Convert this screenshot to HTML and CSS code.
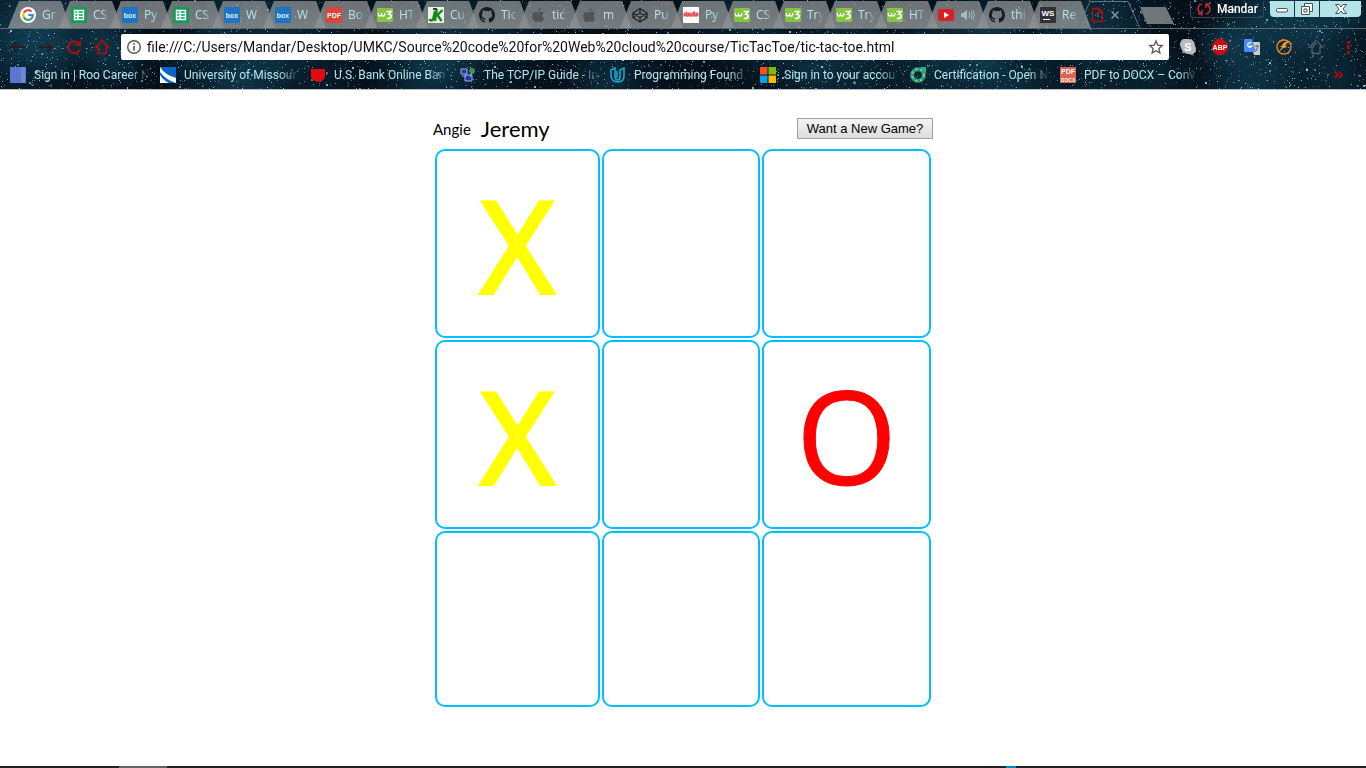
FILE: index.html
```html
<!DOCTYPE html>
<html lang="en">
<head>
<meta charset="utf-8">
<title>Tic Tac Toe</title>
<link rel="stylesheet" href="styles.css">
</head>
<body>
<svg class="defs" aria-hidden="true">
  <symbol id="google" viewBox="0 0 16 16"><circle cx="8" cy="8" r="8" fill="#fff"/><g fill="none" stroke-width="2.2"><path d="M11.5 4.6A4.8 4.8 0 0 0 3.8 5.8" stroke="#ea4335"/><path d="M3.8 5.8a4.8 4.8 0 0 0 0 4.6" stroke="#fbbc05"/><path d="M3.8 10.3a4.8 4.8 0 0 0 7.3 1.5" stroke="#34a853"/><path d="M11.1 11.8A4.8 4.8 0 0 0 12.8 8H8.2" stroke="#4285f4"/></g></symbol>
  <symbol id="sheets" viewBox="0 0 16 16"><rect width="16" height="16" rx="1" fill="#109d58"/><path d="M3.5 3.5h9v9h-9zM3.5 6.5h9M3.5 9.5h9M7 3.5v9" fill="none" stroke="#fff" stroke-width="1.4"/></symbol>
  <symbol id="box" viewBox="0 0 16 16"><rect width="16" height="16" rx="1" fill="#1b75c4"/><text x="8" y="10.6" text-anchor="middle" font-size="7" font-weight="700" fill="#e9f5ff">box</text></symbol>
  <symbol id="pdf" viewBox="0 0 16 16"><rect width="16" height="16" rx="1.5" fill="#dc4437"/><text x="8" y="10.6" text-anchor="middle" font-size="7" font-weight="700" fill="#fff">PDF</text></symbol>
  <symbol id="w3" viewBox="0 0 16 16"><rect y="1" width="16" height="14" rx="1" fill="#83c440"/><path d="M1.300 6v1.400q0 1.600 1.600 1.600t1.700-1.600V6v1.400Q4.600 9 6.200 9T7.800 7.400V6" fill="none" stroke="#fff" stroke-width="1.300"/><path d="M9.500 4.500H14L11.700 7.200q2.600.2 2.400 2.300-.4 2.300-4.300 2" fill="none" stroke="#fff" stroke-width="1.600"/></symbol>
  <symbol id="jk" viewBox="0 0 16 16"><rect width="16" height="16" fill="#e9f0e4"/><path d="M1 12.500q4 2.500 4.500-1.500L7 4M7 14 8.800 2M14.500 3 9.500 8l4 6" fill="none" stroke="#168719" stroke-width="2.400"/><path d="M5 1h4v2H5z" fill="#244b20"/></symbol>
  <symbol id="github" viewBox="0 0 16 16"><path fill="#191c20" d="M8 0C3.580 0 0 3.580 0 8c0 3.540 2.290 6.530 5.470 7.590.4.070.55-.17.55-.38v-1.490c-2.010.37-2.530-.49-2.690-.94-.09-.23-.48-.94-.82-1.130-.28-.15-.68-.52-.01-.53.63-.01 1.080.58 1.230.82.72 1.210 1.870.87 2.330.66.07-.52.28-.87.51-1.070-1.780-.2-3.640-.89-3.640-3.950 0-.87.31-1.590.82-2.150-.08-.2-.36-1.020.08-2.120 0 0 .67-.21 2.200.82a7.500 7.500 0 0 1 4 0c1.530-1.040 2.200-.82 2.200-.82.44 1.100.16 1.920.08 2.120.51.56.82 1.270.82 2.150 0 3.070-1.870 3.750-3.650 3.950.29.25.54.73.54 1.480v2.200c0 .21.15.46.55.38A8 8 0 0 0 16 8c0-4.420-3.580-8-8-8z"/></symbol>
  <symbol id="apple" viewBox="0 0 16 16"><path fill="#505458" d="M10.800 1Q11 3.400 8 4.500 7.700 2 10.800 1zM12.500 9q0-2 1.500-3-2-2.400-5.300-.7-1 .4-2-.1Q4.500 4.400 3.200 6C1 9 3 14 5 15c1.300.4 2-.4 3.300-.4s2 .8 3.200.3c1.300-.7 2-2 2.500-3.200Q12.500 11 12.500 9z"/></symbol>
  <symbol id="codepen" viewBox="0 0 16 16"><path d="M8 1.500 15 6v4.500L8 15 1 10.500V6zM8 1.500V6m0 9v-4.500M1 6l7 4.500L15 6M1 10.500 8 6l7 4.500" fill="none" stroke="#25292c" stroke-width="1.400"/></symbol>
  <symbol id="chart" viewBox="0 0 16 16"><rect width="16" height="16" fill="#fff"/><path d="M1 9V6h1v2h1V5h1v4h1V6h2v3h1V6h1v3h1V5h2v4h1V6h2v3z" fill="#ed5055" stroke="#ed5055"/></symbol>
  <symbol id="youtube" viewBox="0 0 16 16"><rect y="2" width="16" height="12" rx="2" fill="#d92027"/><path d="m6 5 5 3-5 3z" fill="#fff"/></symbol>
  <symbol id="ws" viewBox="0 0 16 16"><rect width="16" height="16" fill="#303236"/><text x="8" y="9" text-anchor="middle" font-size="8" font-weight="700" fill="#fff">WS</text><path d="M3 12.500h7" stroke="#fff" stroke-width="1.200"/></symbol>
  <symbol id="sound" viewBox="0 0 16 16"><path d="M1 6h2l4-3v10L3 10H1z" fill="#a5bdc2"/><path d="M9 5q1.500 3 0 6m2-7q2 4 0 8m2-9q3 5 0 10" fill="none" stroke="#a5bdc2"/></symbol>
</svg>

<header class="browser">
  <canvas class="stars" aria-hidden="true"></canvas>
  <div class="strip">
    <nav class="tabs" aria-label="Open tabs">
      <button class="tab"><svg><use href="#google"/></svg><span>Gr</span></button>
      <button class="tab"><svg><use href="#sheets"/></svg><span>CS</span></button>
      <button class="tab"><svg><use href="#box"/></svg><span>Py</span></button>
      <button class="tab"><svg><use href="#sheets"/></svg><span>CS</span></button>
      <button class="tab"><svg><use href="#box"/></svg><span>W</span></button>
      <button class="tab"><svg><use href="#box"/></svg><span>W</span></button>
      <button class="tab"><svg><use href="#pdf"/></svg><span>Bo</span></button>
      <button class="tab"><svg><use href="#w3"/></svg><span>HT</span></button>
      <button class="tab"><svg><use href="#jk"/></svg><span>Cu</span></button>
      <button class="tab"><svg><use href="#github"/></svg><span>Tic</span></button>
      <button class="tab"><svg><use href="#apple"/></svg><span>tic</span></button>
      <button class="tab"><svg><use href="#apple"/></svg><span>m</span></button>
      <button class="tab"><svg><use href="#codepen"/></svg><span>Pu</span></button>
      <button class="tab"><svg><use href="#chart"/></svg><span>Py</span></button>
      <button class="tab"><svg><use href="#w3"/></svg><span>CS</span></button>
      <button class="tab"><svg><use href="#w3"/></svg><span>Try</span></button>
      <button class="tab"><svg><use href="#w3"/></svg><span>Try</span></button>
      <button class="tab"><svg><use href="#w3"/></svg><span>HT</span></button>
      <button class="tab" aria-label="Video"><svg><use href="#youtube"/></svg><svg><use href="#sound"/></svg></button>
      <button class="tab"><svg><use href="#github"/></svg><span>thi</span></button>
      <button class="tab"><svg><use href="#ws"/></svg><span>Re</span></button>
    </nav>
    <button class="current" aria-label="Current tab">
      <svg class="edge" viewBox="0 0 62 28"><path d="M0 27.500 12 .5h38l12 27" fill="none" stroke="#66757b"/></svg>
      <svg viewBox="0 0 16 16"><path d="M3.500 1.500h6l4 4v9h-10zM9.500 1.500v4h4" fill="none" stroke="#b60b0b" stroke-width="1.300"/></svg>
      <svg viewBox="0 0 16 16"><path d="m4.500 4.500 7 7m0-7-7 7" stroke="#8296a0" stroke-width="1.500"/></svg>
    </button>
    <button class="newtab" aria-label="New tab"></button>
    <button class="profile"><svg viewBox="0 0 16 16"><path d="M6 3Q2 4 2 8q0 3 3 4M6 9v4H2M10 13q4-1 4-5 0-3-3-4M10 7V3h4" fill="none" stroke="#c02a2a" stroke-width="1.600"/></svg>Mandar</button>
    <div class="window">
      <button aria-label="Minimize"><svg viewBox="0 0 16 16"><rect x="2.500" y="7.500" width="11" height="3.500" rx="1" fill="#fff" stroke="#4a555b"/></svg></button>
      <button aria-label="Restore"><svg viewBox="0 0 16 16"><path d="M5.500 2.500h8v8h-3v3h-8v-8h3zM5.500 5.500h5v5M5 8h3v3H5z" fill="#fff" stroke="#4a555b"/></svg></button>
      <button aria-label="Close"><svg viewBox="0 0 16 16"><path d="M2.500 3.500H6l2 2.500 2-2.500h3.500L10 8l3.500 4.500H10L8 10l-2 2.500H2.500L6 8z" fill="#fff" stroke="#4a555b"/></svg></button>
    </div>
  </div>

  <div class="toolbar">
    <div class="nav">
      <button aria-label="Back"><svg viewBox="0 0 16 16"><path d="M15 8H2m5-5L2 8l5 5" fill="none" stroke="#35151a" stroke-width="1.600"/></svg></button>
      <button aria-label="Forward"><svg viewBox="0 0 16 16"><path d="M1 8h13M9 3l5 5-5 5" fill="none" stroke="#35151a" stroke-width="1.600"/></svg></button>
      <button aria-label="Reload"><svg viewBox="0 0 16 16"><path d="M13 4.500A6 6 0 1 0 14 10" fill="none" stroke="#b30b0b" stroke-width="2"/><path d="M15 1v6H9z" fill="#b30b0b"/></svg></button>
      <button aria-label="Home"><svg viewBox="0 0 16 16"><path d="M1.500 8.500 8 1.500l6.500 7H12v6H4v-6z" fill="none" stroke="#b30b0b" stroke-width="1.700"/></svg></button>
    </div>
    <div class="omnibox">
      <svg viewBox="0 0 16 16"><circle cx="8" cy="8" r="6.300" fill="none" stroke="#555" stroke-width="1.400"/><path d="M8 7v4.500M8 4v1.700" stroke="#555" stroke-width="1.600"/></svg>
      <input type="text" aria-label="Address" value="file:///C:/Users/Mandar/Desktop/UMKC/Source%20code%20for%20Web%20cloud%20course/TicTacToe/tic-tac-toe.html">
      <button aria-label="Bookmark"><svg viewBox="0 0 16 16"><path d="m8 2 1.800 4.200 4.500.4-3.400 3 1 4.400L8 11.700 4.100 14l1-4.400-3.400-3 4.500-.4z" fill="none" stroke="#555" stroke-width="1.300"/></svg></button>
    </div>
    <div class="extensions">
      <button aria-label="Skype"><svg viewBox="0 0 16 16"><path d="M4 0h5q6 1 6 7 2 3 0 6-2 4-6 2-6 0-8-6-2-4 0-7 1-2 3-2z" fill="#bbb"/><text x="8" y="12" text-anchor="middle" font-size="11" font-weight="700" fill="#fff">S</text></svg></button>
      <button aria-label="AdBlock Plus"><svg viewBox="0 0 16 16"><path d="M5 0h6l5 5v6l-5 5H5l-5-5V5z" fill="#c70d0d"/><text x="8" y="10.800" text-anchor="middle" font-size="7" font-weight="700" fill="#fff">ABP</text></svg></button>
      <button aria-label="Translate"><svg viewBox="0 0 16 16"><path d="M6 3h9q1 0 1 1v12h-6z" fill="#c8cfd2"/><path d="M1 0h7l4 13H1q-1 0-1-1V1q0-1 1-1z" fill="#4c8bf5"/><path d="M7.300 4A2.300 2.300 0 1 0 8 7H5.500" fill="none" stroke="#fff" stroke-width="1.200"/><path d="M11 7h4m-2-1v2m-1 4 2-4" stroke="#526069"/></svg></button>
      <button aria-label="Flash"><svg viewBox="0 0 16 16"><circle cx="8" cy="8" r="7" fill="none" stroke="#ed851e" stroke-width="1.400"/><path d="M15 2Q7 2 6 7H3l3 1-4 6 5-5 5-1-3-1q1-3 6-5z" fill="#ff9d24"/></svg></button>
      <button aria-label="Home extension"><svg viewBox="0 0 16 16"><path d="M1.500 8 8 1.500 14.500 8H12v6.500H4V8z" fill="none" stroke="#555759" stroke-width="1.500"/></svg></button>
      <button aria-label="Menu"><svg viewBox="0 0 16 16"><path d="M7 2h3v3H7zm0 5h3v3H7zm0 5h3v3H7z" fill="#a80b0b"/></svg></button>
    </div>
  </div>

  <nav class="bookmarks" aria-label="Bookmarks">
    <a href="#"><svg viewBox="0 0 16 16"><path d="M0 0h16v16H0z" fill="#5878cf"/><path d="M11 0h4v16h-4z" fill="#6b87d8"/></svg><span>Sign in | Roo Career N</span></a>
    <a href="#"><svg viewBox="0 0 16 16"><path d="M0 0h16v16H0z" fill="#0764c8"/><path d="M0 0q5 8 16 11v5Q6 13 0 5zM0 8q4 6 9 8H0z" fill="#fff"/></svg><span>University of Missour</span></a>
    <a href="#"><svg viewBox="0 0 16 16"><path d="M1 2h14v8q-1 4-7 5-6-1-7-5z" fill="#e00914"/></svg><span>U.S. Bank Online Ban</span></a>
    <a href="#"><svg viewBox="0 0 16 16"><path d="M1 2h6v5H1zm4 6h7v6H5z" fill="#2934a4" stroke="#9bb5ef"/><circle cx="12" cy="4" r="3" fill="#3c9152"/><path d="m12 6-2 4M2 9h4" stroke="#9bb5ef"/></svg><span>The TCP/IP Guide - In</span></a>
    <a href="#"><svg viewBox="0 0 16 16"><path d="M1 3 5 1v8q0 4 3 4 2 0 2-3V3l4-2v8q0 6-6 6-7 0-7-7zM7 4v7" fill="none" stroke="#16a6cf" stroke-width="1.600"/></svg><span>Programming Found</span></a>
    <a href="#"><svg viewBox="0 0 16 16"><path d="M0 0h7.500v7.500H0z" fill="#f65022"/><path d="M8.500 0H16v7.500H8.500z" fill="#80ba01"/><path d="M0 8.500h7.500V16H0z" fill="#02a4ef"/><path d="M8.500 8.500H16V16H8.500z" fill="#ffb902"/></svg><span>Sign in to your accou</span></a>
    <a href="#"><svg viewBox="0 0 16 16"><circle cx="8" cy="8" r="5.800" fill="none" stroke="#209b91" stroke-width="4"/><circle cx="8" cy="8" r="6" fill="none" stroke="#a5c63d" stroke-width="2" stroke-dasharray="2 3"/><path d="M10 0h6v6z" fill="#2eaa92"/></svg><span>Certification - Open N</span></a>
    <a href="#"><svg viewBox="0 0 16 16"><path d="M0 0h16v16H0z" fill="#dc6452"/><text x="8" y="7" text-anchor="middle" font-size="7" font-weight="700" fill="#fff">PDF</text><text x="8" y="15" text-anchor="middle" font-size="5" font-weight="700" fill="#fff">DOCX</text></svg><span>PDF to DOCX – Conv</span></a>
    <button aria-label="More bookmarks"><svg viewBox="0 0 16 16"><path d="m4 5 3 3-3 3m4-6 3 3-3 3" fill="none" stroke="#a80b0b" stroke-width="1.800"/></svg></button>
  </nav>
</header>

<main class="game">
  <div class="players">
    <span>Angie</span>
    <span class="turn">Jeremy</span>
    <button class="restart">Want a New Game?</button>
  </div>
  <div class="board">
    <button class="cell x">X</button><button class="cell" aria-label="Empty"></button><button class="cell" aria-label="Empty"></button>
    <button class="cell x">X</button><button class="cell" aria-label="Empty"></button><button class="cell o">O</button>
    <button class="cell" aria-label="Empty"></button><button class="cell" aria-label="Empty"></button><button class="cell" aria-label="Empty"></button>
  </div>
</main>
<footer class="taskbar"><i class="running"></i><i class="tray"></i></footer>
<script src="stars.js"></script>
</body>
</html>
```
FILE: styles.css
```css
* { box-sizing: border-box; }
body {
  margin: 0;
  min-height: 100vh;
  display: flex;
  flex-direction: column;
  background: #fff;
  font-family: "Open Sans", "Noto Sans", sans-serif;
}
button { padding: 0; border: 0; background: none; font: inherit; color: inherit; }
svg { width: 16px; height: 16px; flex: none; display: block; }
svg text { font-family: "Liberation Sans", sans-serif; }
.defs { position: absolute; width: 0; height: 0; }

.browser {
  position: relative;
  overflow: hidden;
  color: #b4e5ec;
  font-size: 12px;
  border-bottom: 1px solid #b9bdbf;
  background: #04111a;
}
.stars { position: absolute; inset: 0; width: 100%; height: 100%; }
.strip, .toolbar, .bookmarks { position: relative; display: flex; }

.strip { height: 29px; padding: 1px 0 0 8px; border-bottom: 1px solid #5d6a70; align-items: flex-start; }
.tabs { display: flex; }
.tab {
  width: 63px;
  height: 27px;
  margin-right: -12px;
  padding: 0 12px;
  display: flex;
  align-items: center;
  gap: 6px;
  background: linear-gradient(rgba(130, 134, 136, .82), rgba(144, 147, 148, .82));
  clip-path: polygon(0 100%, 11px 0, 53px 0, 100% 100%);
}
.tab span {
  width: 17px;
  overflow: hidden;
  white-space: nowrap;
  text-align: left;
  mask-image: linear-gradient(90deg, #000 50%, transparent);
}
.current { position: relative; width: 62px; height: 28px; margin-left: -1px; padding-left: 11px; display: flex; align-items: center; gap: 2px; }
.current .edge { position: absolute; left: 0; top: 0; width: 62px; height: 28px; }
.newtab { width: 34px; height: 17px; margin-top: 6px; background: #82888b; opacity: .85; clip-path: polygon(0 0, 76% 0, 100% 100%, 20% 100%); }
.profile {
  margin-left: auto;
  width: 74px;
  height: 17px;
  margin-right: 6px;
  display: flex;
  align-items: center;
  justify-content: center;
  gap: 5px;
  color: #fff;
  font: 500 12px/16px Roboto, sans-serif;
  border: 1px solid #38464d;
  border-top: 0;
  border-radius: 0 0 3px 3px;
}
.window { display: flex; height: 16px; margin-right: 5px; }
.window button { width: 25px; display: flex; align-items: center; justify-content: center; background: #b5e3e8; border-right: 1px solid #1c3038; }
.window button:first-child { border-radius: 0 0 0 4px; }
.window button:last-child { width: 41px; border: 0; border-radius: 0 0 4px 0; }

.toolbar { height: 35px; padding: 5px 10px 4px 10px; align-items: center; }
.nav { width: 111px; display: flex; gap: 12px; }
.omnibox { flex: 1; height: 26px; display: flex; align-items: center; padding: 0 5px; background: #fff; border-radius: 2px; }
.omnibox input { flex: 1; min-width: 0; margin-left: 3px; padding: 0 2px; border: 0; outline: 0; background: none; font: 14px/20px Roboto, sans-serif; color: #111; }
.extensions { display: flex; gap: 16px; padding-left: 11px; }

.bookmarks { height: 25px; padding: 0 19px 3px 10px; align-items: center; }
.bookmarks a { width: 150px; display: flex; align-items: center; gap: 8px; color: inherit; text-decoration: none; font: 12px/18px Roboto, sans-serif; }
.bookmarks span {
  width: 118px;
  overflow: hidden;
  white-space: nowrap;
  mask-image: linear-gradient(90deg, #000 80%, transparent 98%);
}
.bookmarks button { margin-left: auto; }

.game { width: 500px; max-width: 100%; margin: 0 auto; padding-top: 24px; flex: 1; }
.players { display: flex; align-items: center; height: 33px; font: 15px/20px Lato, sans-serif; color: #000; padding-bottom: 4px; }
.players .turn { margin-left: 10px; font-size: 22px; }
.restart {
  margin-left: auto;
  width: 136px;
  height: 21px;
  border: 1px solid #a0a0a0;
  background: linear-gradient(#f4f4f4, #dcdcdc);
  font: 13px/15px "Liberation Sans", sans-serif;
}
.board { display: grid; grid-template-columns: 165fr 158fr 169fr; grid-template-rows: 189px 189px 176px; gap: 2px; padding: 2px; }
.cell { min-width: 0; border: 2px solid #00bfff; border-radius: 10px; padding: 0; font: 130px/180px "Open Sans", sans-serif; }
.x { color: #ff0; font-size: 126px; -webkit-text-stroke: 4px #ff0; stroke-linejoin: round; }
.o { color: #f00; -webkit-text-stroke: 1px #f00; }

.taskbar { height: 2px; background: #222326; display: flex; }
.running { width: 48px; margin-left: 119px; background: #626365; }
.tray { width: 10px; margin-left: auto; margin-right: 350px; background: #0a84c4; }
```
FILE: stars.js
```js
const canvas = document.querySelector('.stars');
const w = canvas.width = canvas.clientWidth;
const h = canvas.height = canvas.clientHeight;
const ctx = canvas.getContext('2d');
let seed = 41;
function rnd() {
  seed = (seed * 16807) % 2147483647;
  return seed / 2147483647;
}
ctx.fillStyle = '#04101a';
ctx.fillRect(0, 0, w, h);
for (let i = 0; i < 60; i++) {
  const x = rnd() * w, y = rnd() * h, r = 25 + rnd() * 50;
  const g = ctx.createRadialGradient(x, y, 0, x, y, r);
  g.addColorStop(0, 'rgba(20, 75, 100, .3)');
  g.addColorStop(1, 'rgba(20, 75, 100, 0)');
  ctx.fillStyle = g;
  ctx.fillRect(0, 0, w, h);
}
for (let i = 0; i < w * 7; i++) {
  const bright = rnd();
  ctx.fillStyle = `rgba(165, 215, 230, ${bright * bright * bright * 0.9})`;
  const size = rnd() > 0.95 ? 2 : 1;
  ctx.fillRect(Math.floor(rnd() * w), Math.floor(rnd() * h), size, size);
}
```
